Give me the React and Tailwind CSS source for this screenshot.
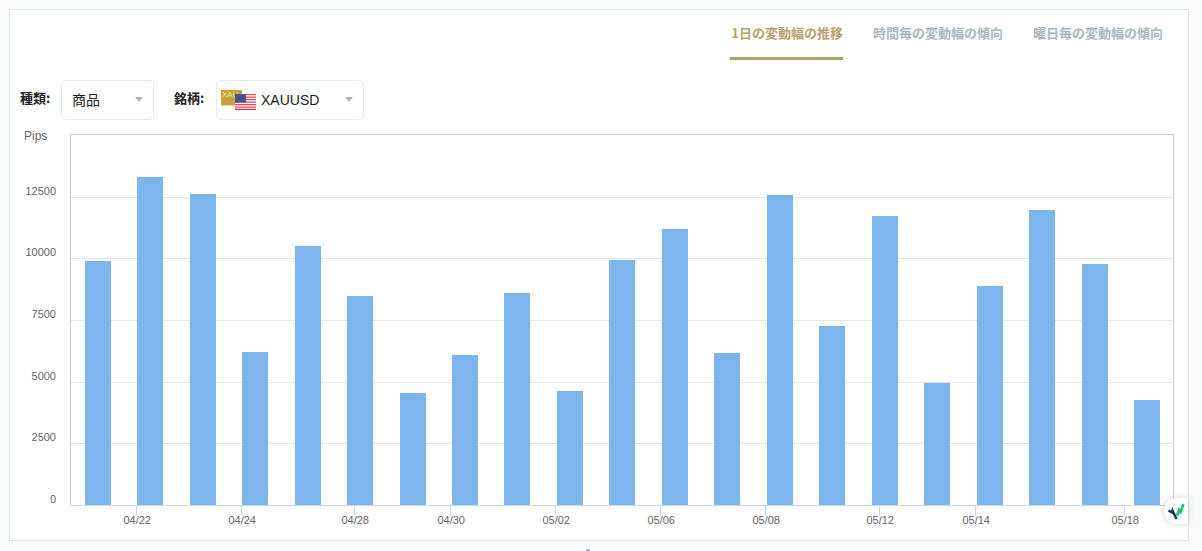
const bars = [
  [85, 261], [137, 177], [190, 194], [242, 352], [295, 246], [347, 296], [400, 393],
  [452, 355], [504, 293], [557, 391], [609, 260], [662, 229], [714, 353], [767, 195],
  [819, 326], [872, 216], [924, 383], [977, 286], [1029, 210], [1082, 264], [1134, 400],
];
const grid = [
  [197.5, "12500", 195], [258.5, "10000", 256], [320.5, "7500", 318], [382.5, "5000", 380], [443.5, "2500", 441],
];
const ticks = [
  [136.5, "04/22"], [241.5, "04/24"], [354.5, "04/28"], [450.5, "04/30"], [555.5, "05/02"],
  [660.5, "05/06"], [765.5, "05/08"], [879.5, "05/12"], [975.5, "05/14"], [1124.5, "05/18"],
];

const OX = 10;
const OY = 125;

function Chart() {
  return (
    <svg width="1178" height="415" viewBox={`${OX} ${OY} 1178 415`} className="block" style={{ fontFamily: '"Liberation Sans", Arial, sans-serif' }}>
      {grid.map(([y]) => (
        <line key={y} x1="70" x2="1173" y1={y} y2={y} stroke="#e6e6e6" strokeWidth="1" />
      ))}
      <line x1="70.5" x2="70.5" y1="134" y2="505" stroke="#cccccc" />
      <line x1="70" x2="1173" y1="134.5" y2="134.5" stroke="#cccccc" />
      <line x1="1173.5" x2="1173.5" y1="134" y2="505" stroke="#cccccc" />
      {bars.map(([x, top]) => (
        <rect key={x} x={x} y={top} width="26" height={505 - top} fill="#7cb5ec" />
      ))}
      <line x1="70" x2="1173" y1="505.5" y2="505.5" stroke="#ccd6eb" />
      {ticks.map(([x, label]) => (
        <g key={label}>
          <line x1={x} x2={x} y1="505" y2="515" stroke="#ccd6eb" />
          <text x={x + 0.7} y="524" textAnchor="middle" fontSize="11" fill="#666666">{label}</text>
        </g>
      ))}
      <text x="24" y="140" fontSize="12" fill="#666666">Pips</text>
      {grid.map(([y, label, base]) => (
        <text key={label} x="56" y={base} textAnchor="end" fontSize="11" fill="#666666">{label}</text>
      ))}
      <text x="56" y="503" textAnchor="end" fontSize="11" fill="#666666">0</text>
    </svg>
  );
}

function Flags() {
  return (
    <span className="relative block w-[36px] h-[20px]">
      <span className="absolute left-0 top-0 w-[21px] h-[16px] bg-[#c9a13c] border-b border-[#e4d6a4] text-[8px] leading-[10px] text-[#f0e3b0] pl-[1px] overflow-hidden" style={{ fontFamily: '"Liberation Sans", sans-serif' }}>XAU</span>
      <svg className="absolute left-[14px] top-[4px]" width="21" height="16" viewBox="0 0 21 16">
        <rect width="21" height="16" fill="#fff" />
        {[0, 2.5, 5, 7.5, 10, 12.5].map((y) => (
          <rect key={y} y={y} width="21" height="1.25" fill="#e0485a" />
        ))}
        <rect y="14.8" width="21" height="1.2" fill="#d8263c" />
        <rect width="11" height="8.5" fill="#4d4f8f" />
      </svg>
    </span>
  );
}

export default function App() {
  return (
    <div className="w-[1202px] h-[551px] overflow-hidden bg-[#f9fafc] pl-[9px] pt-[9px] relative" style={{ fontFamily: '"Noto Sans CJK JP", "Liberation Sans", sans-serif' }}>
      <div className="relative w-[1180px] h-[532px] bg-white border border-[#dfe7ec]">
        <div className="flex justify-end gap-[30px] pr-[25px] h-[50px]">
          <div className="h-[50px] border-b-[3px] border-[#b0a06c] text-[13px] font-bold text-[#b5a36d] pl-[1px] pt-[14px] leading-[18px]">1日の変動幅の推移</div>
          <div className="h-[50px] text-[13px] font-bold text-[#a9b7c2] pt-[14px] leading-[18px]">時間毎の変動幅の傾向</div>
          <div className="h-[50px] text-[13px] font-bold text-[#a9b7c2] pt-[14px] leading-[18px]">曜日毎の変動幅の傾向</div>
        </div>
        <div className="flex items-center h-[40px] mt-[20px] pl-[10px]">
          <span className="text-[13px] font-bold text-[#222] w-[31px] -mt-[4px] whitespace-nowrap">種類:</span>
          <div className="ml-[10px] w-[93px] h-[40px] border border-[#e0ebe8] rounded-[5px] flex items-center justify-between pl-[10px] pr-[10px]">
            <span className="text-[14px] text-[#222] -mt-[1px]">商品</span>
            <span className="w-0 h-0 border-x-[4px] border-x-transparent border-t-[5px] border-t-[#a3b4c4] -mt-[1px]" />
          </div>
          <span className="ml-[20px] text-[13px] font-bold text-[#222] w-[32px] -mt-[4px] whitespace-nowrap">銘柄:</span>
          <div className="ml-[10px] w-[148px] h-[40px] border border-[#e0ebe8] rounded-[5px] flex items-center pl-[4px] pr-[10px]">
            <Flags />
            <span className="ml-[4px] text-[14px] text-[#222]" style={{ fontFamily: '"Liberation Sans", sans-serif' }}>XAUUSD</span>
            <span className="ml-auto w-0 h-0 border-x-[4px] border-x-transparent border-t-[5px] border-t-[#a3b4c4] -mt-[1px]" />
          </div>
        </div>
        <div className="mt-[5px]">
          <Chart />
        </div>
        <div className="absolute right-0 top-[488px] w-[24px] h-[26px] bg-white rounded-l-[13px] shadow-[0_0_6px_rgba(0,0,0,0.18)] flex items-center justify-center">
          <svg width="17" height="17" viewBox="0 0 17 17">
            <path d="M0.5 7.5 L4 9.5 L4.5 7.5 L8.5 16" fill="none" stroke="#15305a" strokeWidth="2.4" />
            <path d="M9 13 L11 7 L12.5 9 L15.5 1" fill="none" stroke="#19c77d" strokeWidth="2.6" />
          </svg>
        </div>
      </div>
      <span className="absolute left-[586px] top-[549px] w-[4px] h-[2px] bg-[#7fa8cc] rounded-t-full" />
    </div>
  );
}
